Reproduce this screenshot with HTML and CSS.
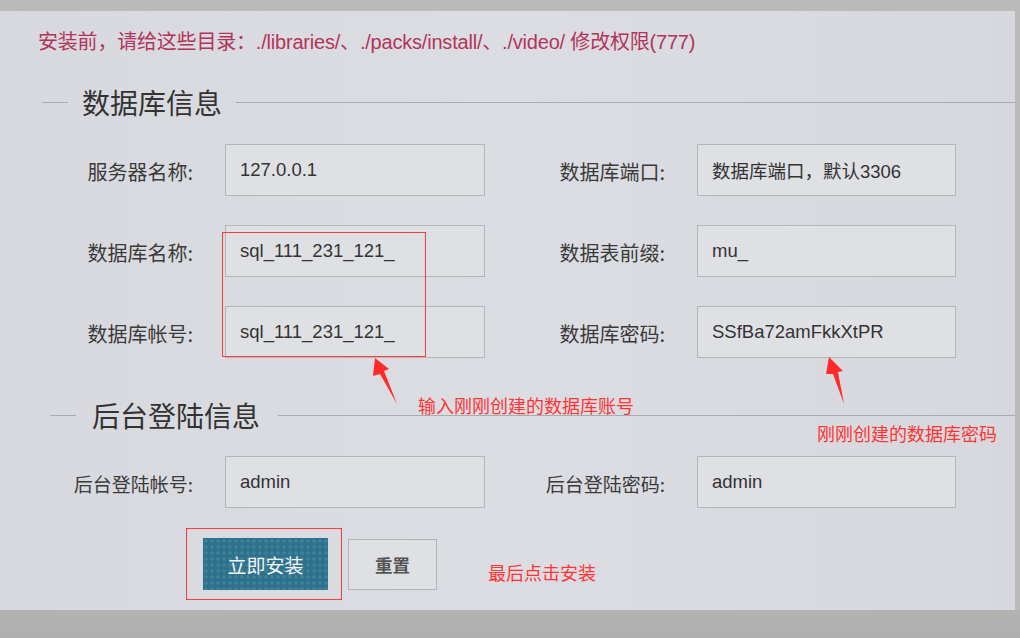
FILE: index.html
```html
<!DOCTYPE html>
<html lang="zh-CN">
<head>
<meta charset="utf-8">
<title>安装</title>
<link rel="stylesheet" href="styles.css">
</head>
<body>
<div class="screen">
  <p class="notice">安装前，请给这些目录：./libraries/、./packs/install/、./video/ 修改权限(777)</p>

  <div class="legend legend-db"><span class="lead"></span><span class="title">数据库信息</span><span class="rule"></span></div>

  <div class="rows">
    <div class="row">
      <div class="field left"><span class="label">服务器名称:</span><div class="input">127.0.0.1</div></div>
      <div class="field right"><span class="label">数据库端口:</span><div class="input">数据库端口，默认3306</div></div>
    </div>
    <div class="row">
      <div class="field left"><span class="label">数据库名称:</span><div class="input">sql_111_231_121_</div></div>
      <div class="field right"><span class="label">数据表前缀:</span><div class="input">mu_</div></div>
    </div>
    <div class="row">
      <div class="field left"><span class="label">数据库帐号:</span><div class="input">sql_111_231_121_</div></div>
      <div class="field right"><span class="label">数据库密码:</span><div class="input">SSfBa72amFkkXtPR</div></div>
    </div>
  </div>

  <div class="legend legend-admin"><span class="lead"></span><span class="title">后台登陆信息</span><span class="rule"></span></div>

  <div class="row admin-row">
    <div class="field left"><span class="label label-admin">后台登陆帐号:</span><div class="input">admin</div></div>
    <div class="field right"><span class="label label-admin">后台登陆密码:</span><div class="input">admin</div></div>
  </div>

  <div class="actions">
    <div class="mark-box"><button class="btn-install">立即安装</button></div>
    <button class="btn-reset">重置</button>
  </div>

  <div class="mark mark-sql"></div>
  <svg class="arrows" width="1020" height="638" viewBox="0 0 1020 638">
    <polygon points="375,358 389,369 384,371 397,404 380,374 373,376" fill="#ff2a2a"/>
    <polygon points="829,357 843,371 838,372 844,404 833,374 826,374" fill="#ff2a2a"/>
  </svg>
  <span class="note note-account">输入刚刚创建的数据库账号</span>
  <span class="note note-password">刚刚创建的数据库密码</span>
  <span class="note note-install">最后点击安装</span>
</div>
<div class="bottom-band"></div>
</body>
</html>
```

FILE: styles.css
```css
html, body {
  margin: 0;
  padding: 0;
}
body {
  width: 1020px;
  height: 638px;
  overflow: hidden;
  background: #b9bab9;
  font-family: "Liberation Sans", "Noto Sans CJK SC", sans-serif;
  color: #333;
}
.screen {
  position: relative;
  margin-top: 11px;
  width: 1015px;
  height: 599px;
  background: linear-gradient(90deg, #d8d9df 0%, #dcdde3 50%, #d7d8dd 100%);
  overflow: hidden;
}
.notice {
  margin: 0;
  padding: 20px 0 0 38px;
  font-size: 20px;
  line-height: 22px;
  color: #b3345a;
  letter-spacing: -0.2px;
}
.legend {
  display: flex;
  align-items: center;
  height: 30px;
}
.legend .lead {
  height: 1px;
  background: #a9abb1;
}
.legend .rule {
  flex: 1;
  height: 1px;
  background: #a9abb1;
}
.legend .title {
  font-family: "Noto Sans CJK SC", sans-serif;
  font-size: 28px;
  line-height: 30px;
  color: #333;
}
.legend-db {
  margin-top: 34px;
  padding-left: 42px;
}
.legend-db .lead { width: 26px; margin-right: 14px; }
.legend-db .title { margin-right: 14px; }
.legend-admin {
  margin-top: 42px;
  padding-left: 50px;
}
.legend-admin .lead { width: 26px; margin-right: 16px; }
.legend-admin .title { margin-right: 18px; }

.rows {
  margin-top: 27px;
  display: flex;
  flex-direction: column;
  gap: 29px;
}
.row {
  display: flex;
  height: 52px;
}
.field {
  display: flex;
  align-items: center;
  gap: 32px;
}
.label {
  font-family: "Noto Sans CJK SC", sans-serif;
  font-size: 20px;
  color: #3a3a3a;
  text-align: right;
  padding-top: 3px;
}
.label-admin {
  font-size: 19px;
}
.left .label { width: 193px; }
.right .label { width: 180px; }
.input {
  box-sizing: border-box;
  height: 52px;
  border: 1px solid #b4b6bc;
  background: #dfe0e4;
  padding-left: 14px;
  display: flex;
  align-items: center;
  font-size: 18.5px;
  color: #333;
}
.left .input { width: 260px; }
.right .input { width: 259px; }

.admin-row { margin-top: 26px; }

.actions {
  margin-top: 20px;
  display: flex;
  align-items: center;
  padding-left: 186px;
  gap: 6px;
}
.mark-box {
  box-sizing: border-box;
  width: 156px;
  height: 72px;
  border: 1.5px solid #ff3b3b;
  display: flex;
  align-items: center;
  justify-content: center;
}
button {
  font-family: "Noto Sans CJK SC", sans-serif;
  cursor: pointer;
}
.btn-install {
  width: 125px;
  height: 52px;
  border: none;
  background: #2f6f90;
  background-image: radial-gradient(circle, rgba(70,150,140,0.55) 1.5px, transparent 2px);
  background-size: 6px 6px;
  color: #f2f4f6;
  font-size: 19px;
  margin-left: 3px;
}
.btn-reset {
  width: 89px;
  height: 51px;
  border: 1px solid #b1b3b9;
  background: #dfe0e4;
  color: #555;
  font-size: 17.5px;
  font-weight: bold;
}

.mark {
  position: absolute;
  box-sizing: border-box;
  border: 1.5px solid #ff3b3b;
}
.mark-sql {
  left: 222px;
  top: 221px;
  width: 204px;
  height: 125px;
}
.arrows {
  position: absolute;
  left: 0;
  top: -11px;
}
.note {
  position: absolute;
  font-family: "Noto Sans CJK SC", sans-serif;
  font-size: 18px;
  line-height: 22px;
  color: #ff3434;
  white-space: nowrap;
}
.note-account { left: 418px; top: 383px; }
.note-password { left: 817px; top: 411px; }
.note-install { left: 488px; top: 550px; }

.bottom-band {
  height: 28px;
  background: linear-gradient(180deg, #b3b4b2 0%, #aeafae 100%);
}
```
